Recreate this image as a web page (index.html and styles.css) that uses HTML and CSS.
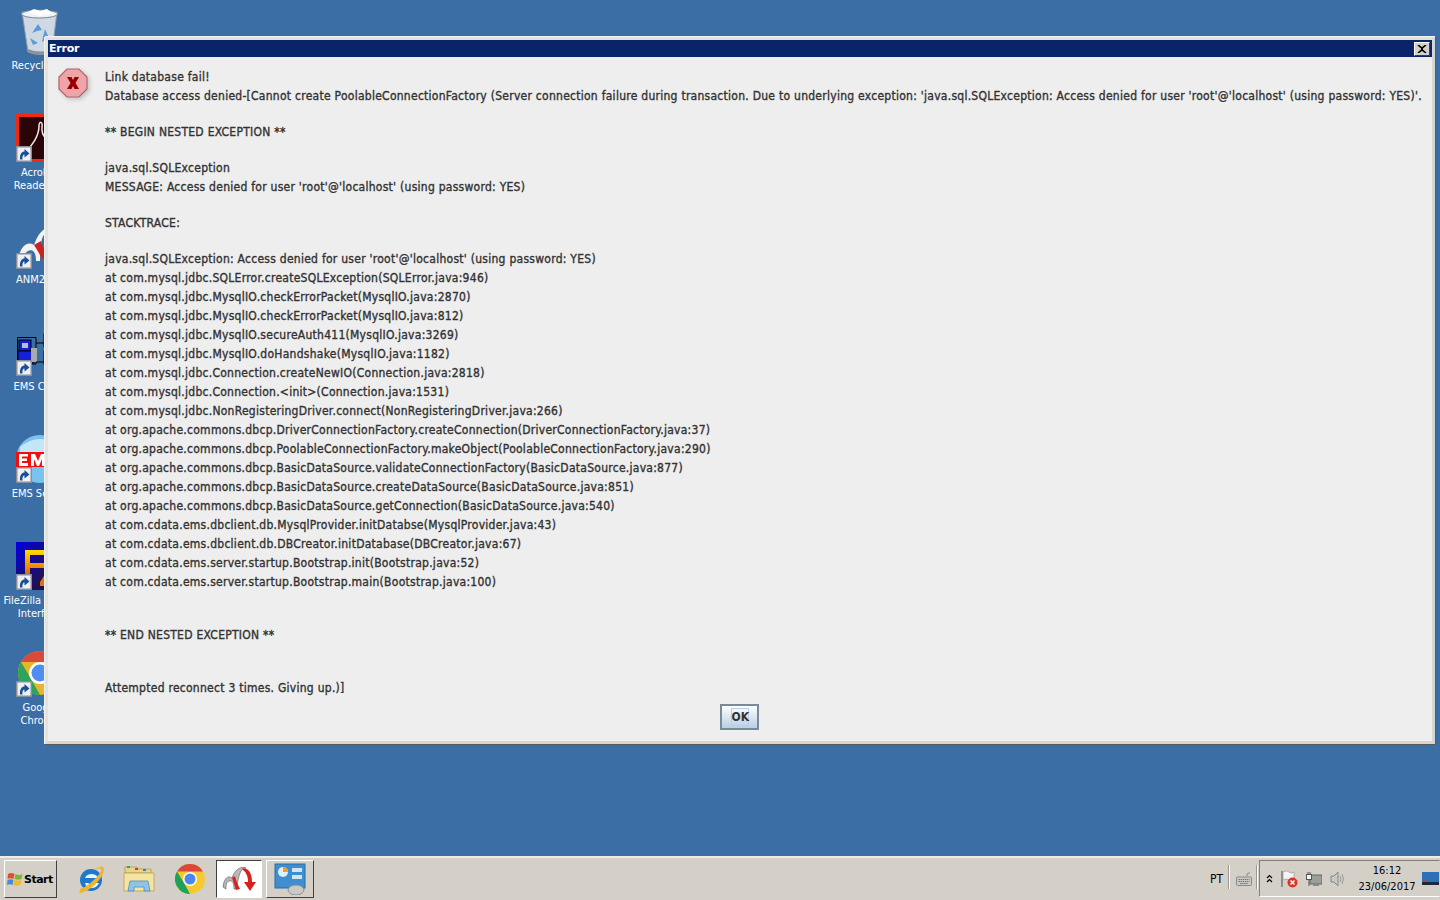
FILE: index.html
```html
<!DOCTYPE html>
<html lang="en">
<head>
<meta charset="utf-8">
<title>Error</title>
<link rel="stylesheet" href="styles.css">
</head>
<body>
<svg class="defs" width="0" height="0">
  <symbol id="sc" viewBox="0 0 16 16">
    <rect x="0.750" y="0.750" width="14.500" height="14.500" fill="#eef0f4" stroke="#8a8f96" stroke-width="1.500"/>
    <path d="M4 13.500C3.500 8 6 5.500 8.500 5.500V3L13.500 7.500L8.500 11.500V8.500C7 8.500 6 10.500 6.500 13.500Z" fill="#1a4f96"/>
  </symbol>
</svg>
<div class="screen">
  <main class="desktop">
    <ul class="icons">
      <li class="item">
        <div class="ico">
          <svg width="48" height="48" viewBox="0 0 48 48">
            <path d="M6 5L41 5L36 45Q24 50 12 45Z" fill="#cfd9e4" stroke="#8f9aa5"/>
            <ellipse cx="23.500" cy="7" rx="18" ry="4" fill="#eef3f7" stroke="#7c8791"/>
            <path d="M12 5L18 2L24 4L31 2L36 6L24 9Z" fill="#fff"/>
            <path d="M16 26L22 17L26 23L21 24ZM29 22L33 31L26 35L27 30ZM14 31L22 36L17 38Z" fill="#5d9bd8"/>
            <path d="M12 42Q24 47 36 42L36 45Q24 50 12 45Z" fill="#8a939b"/>
          </svg>
        </div>
        <span class="lbl">Recycle Bin</span>
      </li>
      <li class="item">
        <div class="ico">
          <svg width="48" height="48" viewBox="0 0 48 48">
            <rect x="1.500" y="1.500" width="45" height="45" fill="#2a0508" stroke="#f02a12" stroke-width="3"/>
            <path d="M10 37C16 32 23 22 23 12C23 7 27 7 26 13C25 22 32 29 42 30" fill="none" stroke="#f0e6e6" stroke-width="1.500"/>
          </svg>
          <svg class="badge"><use href="#sc"/></svg>
        </div>
        <span class="lbl">Acrobat<br>Reader DC</span>
      </li>
      <li class="item">
        <div class="ico">
          <svg width="48" height="48" viewBox="0 0 48 48">
            <path d="M2 40C4 24 12 20 18 24C22 12 28 6 34 7L30 12C26 14 24 22 24 40L20 40C20 30 16 28 12 30C8 32 8 36 8 40Z" fill="#f2f2f2"/>
            <path d="M18 24C22 30 24 34 26 38L34 36C30 32 26 26 25 20Z" fill="#c8231f"/>
          </svg>
          <svg class="badge"><use href="#sc"/></svg>
        </div>
        <span class="lbl">ANM2000</span>
      </li>
      <li class="item">
        <div class="ico">
          <svg width="48" height="48" viewBox="0 0 48 48">
            <path d="M1.500 9.500H20V36H1.500Z" fill="none" stroke="#000" stroke-width="1"/>
            <rect x="3" y="12" width="12" height="11" fill="#1420d8" stroke="#000"/>
            <rect x="6" y="15" width="6" height="5" fill="#b8bcd8"/>
            <rect x="2" y="23" width="16" height="12" fill="#1420d8" stroke="#000"/>
            <rect x="15" y="20" width="6" height="14" fill="#aaa"/>
            <path d="M20 15H30M20 34H30" stroke="#000" stroke-width="1"/>
            <rect x="28" y="6" width="10" height="13" fill="#1420d8" stroke="#000"/>
            <rect x="28" y="23" width="10" height="13" fill="#1420d8" stroke="#000"/>
          </svg>
          <svg class="badge"><use href="#sc"/></svg>
        </div>
        <span class="lbl">EMS Client</span>
      </li>
      <li class="item">
        <div class="ico">
          <svg width="48" height="48" viewBox="0 0 48 48">
            <circle cx="24" cy="24" r="24" fill="#79c3ef"/>
            <path d="M4 12Q24 -4 44 12L44 18H4Z" fill="#c4e6f8"/>
            <rect x="0" y="17" width="48" height="15" fill="#f00f0f"/>
            <path d="M3 19H12V21.500H6V23.500H11V26H6V28H12V31H3ZM15 19H19L22 26L25 19H29V31H26V24L23 31H21L18 24V31H15Z" fill="#fff"/>
          </svg>
          <svg class="badge"><use href="#sc"/></svg>
        </div>
        <span class="lbl">EMS Server</span>
      </li>
      <li class="item">
        <div class="ico">
          <svg width="48" height="48" viewBox="0 0 48 48">
            <defs>
              <linearGradient id="fzb" x1="0" y1="0" x2="1" y2="1">
                <stop offset="0" stop-color="#0000e0"/>
                <stop offset="0.600" stop-color="#201060"/>
                <stop offset="1" stop-color="#300818"/>
              </linearGradient>
              <linearGradient id="fzf" x1="0" y1="0" x2="0" y2="1">
                <stop offset="0" stop-color="#ffdc00"/>
                <stop offset="1" stop-color="#e04a10"/>
              </linearGradient>
            </defs>
            <rect width="48" height="48" fill="url(#fzb)"/>
            <path d="M9 8H32V13H14V21H29V26H14V38H9Z" fill="url(#fzf)"/>
            <path d="M33 26L36 26L36 40L39 40L39 44H36V47H33V44H24V40Z" fill="#e07010"/>
          </svg>
          <svg class="badge"><use href="#sc"/></svg>
        </div>
        <span class="lbl">FileZilla Server<br>Interface</span>
      </li>
      <li class="item">
        <div class="ico">
          <svg width="48" height="48" viewBox="0 0 48 48">
            <circle cx="24" cy="24" r="22" fill="#e8b52c"/>
            <path d="M5 13A22 22 0 0 1 43 13H24Z" fill="#d9493c"/>
            <path d="M5 13L15 30L24 46A22 22 0 0 1 5 13Z" fill="#2ea35a"/>
            <circle cx="24" cy="24" r="11" fill="#fff"/>
            <circle cx="24" cy="24" r="8.500" fill="#4f8df0"/>
          </svg>
          <svg class="badge"><use href="#sc"/></svg>
        </div>
        <span class="lbl">Google<br>Chrome</span>
      </li>
    </ul>

    <section class="dialog">
      <header class="titlebar">
        <span class="title">Error</span>
        <button class="close" type="button">
          <svg width="10" height="8" viewBox="0 0 10 8"><path d="M1 0L5 3.200L9 0M1 8L5 4.800L9 8M4 4H6" fill="none" stroke="#000" stroke-width="1.600"/></svg>
        </button>
      </header>
      <div class="content">
        <div class="body">
          <svg class="err" width="30" height="30" viewBox="0 0 30 30">
            <path d="M9 1H21L29 9V21L21 29H9L1 21V9Z" fill="#eea4a8" stroke="#b06468" stroke-width="1.200"/>
            <path d="M9 9H13.500L15 12L16.500 9H21L17.500 15L21 21H16.500L15 18L13.500 21H9L12.500 15Z" fill="#990000"/>
          </svg>
          <div class="msg">
            <p class="ln">Link database fail!</p>
            <p class="ln">Database access denied-[Cannot create PoolableConnectionFactory (Server connection failure during transaction. Due to underlying exception: 'java.sql.SQLException: Access denied for user 'root'@'localhost' (using password: YES)'.</p>
            <p class="gap"></p>
            <p class="ln">** BEGIN NESTED EXCEPTION **</p>
            <p class="gap"></p>
            <p class="ln">java.sql.SQLException</p>
            <p class="ln">MESSAGE: Access denied for user 'root'@'localhost' (using password: YES)</p>
            <p class="gap"></p>
            <p class="ln">STACKTRACE:</p>
            <p class="gap"></p>
            <p class="ln">java.sql.SQLException: Access denied for user 'root'@'localhost' (using password: YES)</p>
            <p class="ln">at com.mysql.jdbc.SQLError.createSQLException(SQLError.java:946)</p>
            <p class="ln">at com.mysql.jdbc.MysqlIO.checkErrorPacket(MysqlIO.java:2870)</p>
            <p class="ln">at com.mysql.jdbc.MysqlIO.checkErrorPacket(MysqlIO.java:812)</p>
            <p class="ln">at com.mysql.jdbc.MysqlIO.secureAuth411(MysqlIO.java:3269)</p>
            <p class="ln">at com.mysql.jdbc.MysqlIO.doHandshake(MysqlIO.java:1182)</p>
            <p class="ln">at com.mysql.jdbc.Connection.createNewIO(Connection.java:2818)</p>
            <p class="ln">at com.mysql.jdbc.Connection.&lt;init&gt;(Connection.java:1531)</p>
            <p class="ln">at com.mysql.jdbc.NonRegisteringDriver.connect(NonRegisteringDriver.java:266)</p>
            <p class="ln">at org.apache.commons.dbcp.DriverConnectionFactory.createConnection(DriverConnectionFactory.java:37)</p>
            <p class="ln">at org.apache.commons.dbcp.PoolableConnectionFactory.makeObject(PoolableConnectionFactory.java:290)</p>
            <p class="ln">at org.apache.commons.dbcp.BasicDataSource.validateConnectionFactory(BasicDataSource.java:877)</p>
            <p class="ln">at org.apache.commons.dbcp.BasicDataSource.createDataSource(BasicDataSource.java:851)</p>
            <p class="ln">at org.apache.commons.dbcp.BasicDataSource.getConnection(BasicDataSource.java:540)</p>
            <p class="ln">at com.cdata.ems.dbclient.db.MysqlProvider.initDatabse(MysqlProvider.java:43)</p>
            <p class="ln">at com.cdata.ems.dbclient.db.DBCreator.initDatabase(DBCreator.java:67)</p>
            <p class="ln">at com.cdata.ems.server.startup.Bootstrap.init(Bootstrap.java:52)</p>
            <p class="ln">at com.cdata.ems.server.startup.Bootstrap.main(Bootstrap.java:100)</p>
            <p class="gap"></p>
            <p class="gap"></p>
            <p class="ln">** END NESTED EXCEPTION **</p>
            <p class="gap"></p>
            <p class="gap"></p>
            <p class="ln">Attempted reconnect 3 times. Giving up.)]</p>
          </div>
        </div>
        <div class="actions">
          <button class="ok" type="button"><span class="ok-in">OK</span></button>
        </div>
      </div>
    </section>
  </main>

  <footer class="taskbar">
    <button class="start" type="button">
      <svg width="16" height="15" viewBox="0 0 16 15">
        <path d="M1 2Q4 0 7.500 2L6.500 7Q3.500 5.500 0.500 7Z" fill="#e2502a"/>
        <path d="M8.500 2Q12 4 15.500 2L14.500 7Q11 8.500 7.500 7Z" fill="#7fb53a"/>
        <path d="M0.500 8Q3.500 6.500 6.500 8L5.500 13Q3 11.500 0 13Z" fill="#3f8fd6"/>
        <path d="M7.500 8Q11 9.500 14.500 8L13.500 13Q10 14.500 6.500 13Z" fill="#f2b92c"/>
      </svg>
      <span>Start</span>
    </button>
    <div class="quick">
      <svg class="q-ie" width="32" height="32" viewBox="0 0 32 32">
        <circle cx="16" cy="17" r="11" fill="#1f78cc"/>
        <path d="M10 15H23C22 12 19.500 11 16.500 11C13.500 11 11 12.500 10 15Z" fill="#e8f4fb"/>
        <path d="M10 20C11 24 13.500 25 16.500 25C20 25 22.500 23.500 24 20H20C19 21.500 18 22 16.500 22C15 22 14 21.500 13.500 20Z" fill="#e8f4fb"/>
        <path d="M6 25C1 33 8 30 16 25C23 20 32 8 28 4C26 3 23 4 20 6C24 5 27 5 26 8C24 14 8 27 6 25Z" fill="#eeb42c"/>
      </svg>
      <svg class="q-fold" width="32" height="32" viewBox="0 0 32 32">
        <path d="M2 4H14L16 6H28V10H2Z" fill="#e8d58c" stroke="#b09a50" stroke-width=".8"/>
        <rect x="4" y="3" width="3" height="2" fill="#2fae3a"/>
        <rect x="12" y="5" width="3" height="2" fill="#d9382a"/>
        <rect x="20" y="6" width="3" height="2" fill="#2a84d8"/>
        <path d="M1 10H31V28H1Z" fill="#f5e3a0" stroke="#b8a158" stroke-width=".8"/>
        <path d="M7 18H25L27 28H21V24H11V28H5Z" fill="#8fc4e8" stroke="#4f8ec0" stroke-width=".8"/>
      </svg>
      <svg class="q-chrome" width="30" height="30" viewBox="0 0 30 30">
        <circle cx="15" cy="15" r="15" fill="#f5c92f"/>
        <path d="M2 7.500A15 15 0 0 1 28 7.500H15Z" fill="#d9483b"/>
        <path d="M2 7.500L9 19L15 30A15 15 0 0 1 2 7.500Z" fill="#1fa15a"/>
        <circle cx="15" cy="15" r="7" fill="#fff"/>
        <circle cx="15" cy="15" r="5.500" fill="#4f86ec"/>
      </svg>
    </div>
    <div class="task active">
      <svg width="34" height="28" viewBox="0 0 34 28">
        <path d="M1 22C2 13 6 10 10 13C13 4 19 1 24 3C20 3 16 8 15 24H12C12 17 10 15 7 16C4 17 4 20 4 24Z" fill="#b8b8b8" stroke="#555" stroke-width=".6"/>
        <path d="M10 13C12 18 13 22 14 25L18 24C16 20 14 16 13 11ZM20 4C26 2 30 8 30 17L34 17L28 26L22 17L26 17C26 11 24 7 20 4Z" fill="#d8201c"/>
      </svg>
    </div>
    <div class="task">
      <svg width="32" height="32" viewBox="0 0 32 32">
        <rect x="1" y="1" width="30" height="24" fill="#3f8fd0" stroke="#2a6aa6"/>
        <circle cx="9" cy="9" r="5" fill="#dff0fa"/>
        <path d="M9 4A5 5 0 0 1 14 9H9Z" fill="#f29a2a"/>
        <rect x="18" y="5" width="10" height="4" fill="#cfe6f6"/>
        <rect x="18" y="12" width="10" height="4" fill="#cfe6f6"/>
        <ellipse cx="22" cy="27" rx="8" ry="5" fill="#c9c9c9" stroke="#8e8e8e"/>
      </svg>
    </div>
    <div class="tray-left">
      <span class="lang">PT</span>
      <i class="sep"></i>
      <svg width="16" height="14" viewBox="0 0 16 14">
        <path d="M11 4V2L14 0.500" fill="none" stroke="#8a8a8a"/>
        <rect x="0.500" y="5" width="15" height="8.500" rx="1" fill="#c9c9c5" stroke="#8a8a8a"/>
        <path d="M2.500 7.500H13.500M2.500 9.500H13.500M4 11.500H12" stroke="#777" stroke-dasharray="1.500 .6"/>
      </svg>
      <i class="sep"></i>
    </div>
    <div class="tray">
      <svg class="chev" width="7" height="9" viewBox="0 0 7 9"><path d="M1 4L3.500 1.500L6 4M1 8L3.500 5.500L6 8" fill="none" stroke="#000" stroke-width="1.200"/></svg>
      <svg class="flag" width="18" height="18" viewBox="0 0 18 18">
        <path d="M2 1V17" stroke="#777" stroke-width="1.500"/>
        <path d="M3 2Q7 0 9 2T14 2V10Q11 12 9 10T3 10Z" fill="#f4f4f2" stroke="#999" stroke-width=".7"/>
        <circle cx="12.500" cy="12.500" r="5" fill="#d9342a"/>
        <path d="M10.500 10.500L14.500 14.500M14.500 10.500L10.500 14.500" stroke="#fff" stroke-width="1.500"/>
      </svg>
      <svg class="net" width="16" height="16" viewBox="0 0 16 16">
        <rect x="4" y="4" width="12" height="9" fill="#9a9f98" stroke="#666"/>
        <rect x="7" y="13" width="6" height="2" fill="#888"/>
        <rect x="0.500" y="3.500" width="5" height="5" fill="#f3f3f0" stroke="#555"/>
        <path d="M2 1V3.500M4 1V3.500M3 8.500V15" stroke="#555"/>
      </svg>
      <svg class="snd" width="16" height="16" viewBox="0 0 16 16">
        <path d="M1 5H4L8 1V15L4 11H1Z" fill="#c8c8c4" stroke="#888"/>
        <path d="M10 5Q12 8 10 11M12 3Q15 8 12 13" fill="none" stroke="#999"/>
      </svg>
      <div class="clock"><span>16:12</span><span>23/06/2017</span></div>
      <svg class="show" width="17" height="14" viewBox="0 0 17 14">
        <rect width="17" height="10" fill="#2f6fb5"/>
        <rect y="10" width="17" height="3" fill="#1d2a3a"/>
        <rect x="1" y="8" width="3" height="2" fill="#d33"/>
      </svg>
    </div>
  </footer>
</div>
</body>
</html>
```

FILE: styles.css
```css
* { box-sizing: border-box; }
html, body { margin: 0; height: 100%; }
body { overflow: hidden; font-family: "Liberation Sans", Arial, sans-serif; }
.defs { display: block; height: 0; }
.screen { width: 1440px; height: 900px; display: flex; flex-direction: column; background: #3b6ea5; }

.desktop { position: relative; flex: 1; min-height: 0; }
.icons { list-style: none; margin: 0; padding: 7px 0 0 1px; width: 79px; }
.item { height: 107px; display: flex; flex-direction: column; align-items: center; }
.ico { position: relative; width: 48px; height: 48px; margin-bottom: 4px; }
.ico > svg:first-child { display: block; }
.badge { position: absolute; left: 0; bottom: 0; width: 16px; height: 16px; }
.lbl { display: block; width: 78px; font: 11px/13px "DejaVu Sans", sans-serif; font-stretch: condensed; color: #fff; text-align: center; }

.dialog {
  position: absolute; left: 45px; top: 37px; width: 1390px; height: 707px;
  border: 3px solid #e4e2dd; border-bottom-color: #d8d6d0; border-right-color: #d8d6d0;
  box-shadow: 0 1px 0 #5a5a5a, 1px 0 0 #5a5a5a, -1px 0 0 #f2f2f2, 0 -1px 0 #f2f2f2;
  background: #eeeeee; display: flex; flex-direction: column;
}
.titlebar { height: 17px; background: #0a246a; display: flex; align-items: center; justify-content: space-between; padding: 0 2px 0 1px; flex: none; }
.title { font: bold 11px/16px "DejaVu Sans", sans-serif; color: #fff; letter-spacing: -0.2px; }
.close { width: 16px; height: 14px; padding: 0; border: 1px solid; border-color: #fff #404040 #404040 #fff; background: #d4d0c8; display: flex; align-items: center; justify-content: center; }
.content { flex: 1; display: flex; flex-direction: column; min-height: 0; }
.body { display: flex; padding: 11px 0 0 10px; }
.err { flex: none; margin: 0 17px 0 0; filter: drop-shadow(2px 2px 2px rgba(0,0,0,.18)); }
.msg { color: #333333; font-family: "DejaVu Sans", sans-serif; font-stretch: condensed; font-size: 12px; letter-spacing: 0.265px; -webkit-text-stroke: 0.35px #333333; min-width: 0; white-space: nowrap; }
.ln { margin: 0; height: 19px; line-height: 19px; }
.gap { margin: 0; height: 17px; }
.actions { display: flex; justify-content: center; padding: 6px 1px 0 0; }
.ok { width: 39px; height: 26px; padding: 0; border: 2px solid #7a8a99; background: linear-gradient(#fdfefe, #b8cfe5); display: flex; align-items: center; justify-content: center; }
.ok-in { width: 18px; height: 18px; border: 1px solid #b8cfe5; font: bold 12px/16px "DejaVu Sans", sans-serif; font-stretch: condensed; color: #333; display: block; text-align: center; }

.taskbar { flex: none; height: 44px; background: #d4d0c8; border-top: 2px solid #eeece6; display: flex; align-items: flex-start; padding-top: 2px; position: relative; }
.start { margin-left: 4px; width: 53px; height: 38px; padding: 0 0 0 2px; border: 1px solid; border-color: #fff #404040 #404040 #fff; background: #d4d0c8; display: flex; align-items: center; gap: 1px; font: bold 11px "DejaVu Sans", sans-serif; letter-spacing: -0.5px; color: #000; }
.quick { display: flex; align-items: center; height: 38px; margin-left: 18px; }
.q-fold { margin-left: 16px; }
.q-chrome { margin-left: 20px; }
.task { width: 48px; height: 38px; margin-left: 4px; border: 1px solid; border-color: #fff #404040 #404040 #fff; background: #d4d0c8; display: flex; align-items: center; justify-content: center; }
.task.active { margin-left: 11px; width: 46px; background: #fff; border-color: #404040 #fff #fff #404040; }
.tray-left { margin-left: auto; height: 38px; display: flex; align-items: center; }
.lang { font: 12px "DejaVu Sans", sans-serif; font-stretch: condensed; color: #000; margin-right: 5px; }
.sep { display: block; width: 2px; height: 24px; margin-bottom: 4px; background: #9a968e; border-right: 1px solid #fff; }
.tray-left svg { margin: 0 4px 0 6px; }
.tray { margin-left: 1px; width: 181px; height: 37px; display: flex; align-items: center; padding-left: 6px; border: 1px solid; border-color: #808080 #d4d0c8 #fff #808080; }
.flag { margin-left: 7px; }
.net { margin-left: 8px; }
.snd { margin-left: 8px; }
.clock { margin-left: 9px; width: 64px; display: flex; flex-direction: column; align-items: center; font: 11px/16px "DejaVu Sans", sans-serif; font-stretch: condensed; color: #000; }
.show { margin-left: auto; }
```
